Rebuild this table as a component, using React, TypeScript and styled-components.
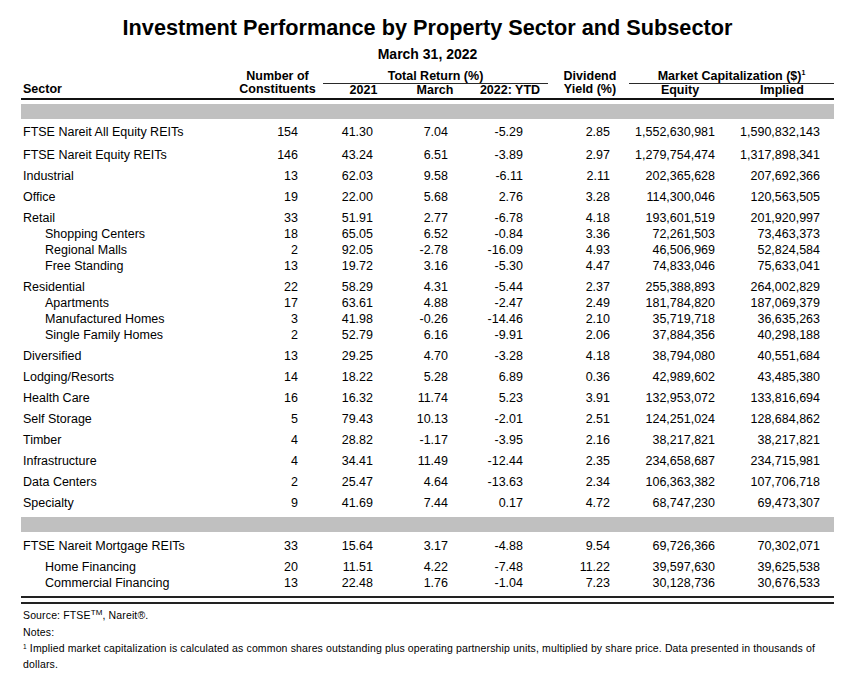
import React from "react";
import styled, { createGlobalStyle } from "styled-components";

const GlobalStyle = createGlobalStyle`
  html, body {
    margin: 0;
    padding: 0;
    background: #ffffff;
  }
  body {
    font-family: "Liberation Sans", Arial, sans-serif;
    color: #000;
  }
  * { box-sizing: border-box; }
`;

const Page = styled.div`
  width: 856px;
  padding: 15px 22px 0 21px;
`;

const Title = styled.h1`
  margin: 0;
  text-align: center;
  font-size: 21.7px;
  line-height: 26px;
  font-weight: 700;
`;

const DateLine = styled.div`
  margin-top: 5px;
  text-align: center;
  font-size: 14px;
  line-height: 16px;
  font-weight: 700;
`;

const HeaderRow = styled.div`
  margin-top: 7.5px;
  display: flex;
  align-items: flex-end;
  padding-bottom: 1.5px;
  border-bottom: 2px solid #111;
  font-weight: 700;
  font-size: 12.5px;
`;

const HeadCell = styled.div<{ $w: number; $align?: string; $pl?: number }>`
  width: ${(p) => p.$w}px;
  flex: none;
  display: flex;
  flex-direction: column;
  align-items: ${(p) => p.$align || "center"};
  padding-left: ${(p) => p.$pl || 0}px;
  line-height: 13.5px;
  white-space: nowrap;
`;

const Group = styled.div<{ $w: number }>`
  width: ${(p) => p.$w}px;
  flex: none;
  display: flex;
  flex-direction: column;
`;

const GroupTitle = styled.div<{ $ml?: number; $mr?: number }>`
  margin-left: ${(p) => p.$ml || 0}px;
  margin-right: ${(p) => p.$mr || 0}px;
  line-height: 12.5px;
  text-align: center;
  white-space: nowrap;
  border-bottom: 1.5px solid #2a2a2a;
`;

const GroupSubs = styled.div<{ $cols: string }>`
  display: grid;
  grid-template-columns: ${(p) => p.$cols};
  line-height: 13px;
  text-align: center;
  white-space: nowrap;
`;

const Sup = styled.sup`
  font-size: 7px;
  vertical-align: 5px;
  line-height: 0;
`;

const Band = styled.div<{ $mt: number }>`
  margin-top: ${(p) => p.$mt}px;
  height: 15px;
  background: #c0c0c0;
`;

const Row = styled.div<{ $mt: number }>`
  margin-top: ${(p) => p.$mt}px;
  display: grid;
  grid-template-columns: 237px 40px 75px 75px 75px 87px 105px 105px;
  padding-right: 14px;
  font-size: 12.5px;
  line-height: 16px;
  white-space: nowrap;
`;

const NameCell = styled.div<{ $sub?: boolean }>`
  padding-left: ${(p) => (p.$sub ? 24 : 2)}px;
`;

const NumCell = styled.div`
  text-align: right;
`;

const DoubleRule = styled.div`
  margin-top: 5px;
  height: 8px;
  border-top: 2px solid #222;
  border-bottom: 2px solid #222;
`;

const Foot = styled.div<{ $mt: number }>`
  margin-top: ${(p) => p.$mt}px;
  padding-left: 2px;
  font-size: 10.5px;
  line-height: 16px;
  letter-spacing: 0.14px;
`;

const FootSup = styled.sup<{ $size?: number; $lift?: number }>`
  font-size: ${(p) => p.$size || 6.5}px;
  vertical-align: ${(p) => p.$lift ?? 3}px;
  line-height: 0;
`;

type R = {
  name: string;
  v: string[];
  mt: number;
  sub?: boolean;
};

const r = (name: string, mt: number, sub: boolean, v: string) => ({
  name,
  mt,
  sub,
  v: v.split(" "),
});

const equityRows: R[] = [
  r("FTSE Nareit All Equity REITs", 5, false, "154 41.30 7.04 -5.29 2.85 1,552,630,981 1,590,832,143"),
  r("FTSE Nareit Equity REITs", 7, false, "146 43.24 6.51 -3.89 2.97 1,279,754,474 1,317,898,341"),
  r("Industrial", 5, false, "13 62.03 9.58 -6.11 2.11 202,365,628 207,692,366"),
  r("Office", 5, false, "19 22.00 5.68 2.76 3.28 114,300,046 120,563,505"),
  r("Retail", 5, false, "33 51.91 2.77 -6.78 4.18 193,601,519 201,920,997"),
  r("Shopping Centers", 0, true, "18 65.05 6.52 -0.84 3.36 72,261,503 73,463,373"),
  r("Regional Malls", 0, true, "2 92.05 -2.78 -16.09 4.93 46,506,969 52,824,584"),
  r("Free Standing", 0, true, "13 19.72 3.16 -5.30 4.47 74,833,046 75,633,041"),
  r("Residential", 5, false, "22 58.29 4.31 -5.44 2.37 255,388,893 264,002,829"),
  r("Apartments", 0, true, "17 63.61 4.88 -2.47 2.49 181,784,820 187,069,379"),
  r("Manufactured Homes", 0, true, "3 41.98 -0.26 -14.46 2.10 35,719,718 36,635,263"),
  r("Single Family Homes", 0, true, "2 52.79 6.16 -9.91 2.06 37,884,356 40,298,188"),
  r("Diversified", 5, false, "13 29.25 4.70 -3.28 4.18 38,794,080 40,551,684"),
  r("Lodging/Resorts", 5, false, "14 18.22 5.28 6.89 0.36 42,989,602 43,485,380"),
  r("Health Care", 5, false, "16 16.32 11.74 5.23 3.91 132,953,072 133,816,694"),
  r("Self Storage", 5, false, "5 79.43 10.13 -2.01 2.51 124,251,024 128,684,862"),
  r("Timber", 5, false, "4 28.82 -1.17 -3.95 2.16 38,217,821 38,217,821"),
  r("Infrastructure", 5, false, "4 34.41 11.49 -12.44 2.35 234,658,687 234,715,981"),
  r("Data Centers", 5, false, "2 25.47 4.64 -13.63 2.34 106,363,382 107,706,718"),
  r("Specialty", 5, false, "9 41.69 7.44 0.17 4.72 68,747,230 69,473,307"),
];

const mortgageRows: R[] = [
  r("FTSE Nareit Mortgage REITs", 5.5, false, "33 15.64 3.17 -4.88 9.54 69,726,366 70,302,071"),
  r("Home Financing", 5.5, true, "20 11.51 4.22 -7.48 11.22 39,597,630 39,625,538"),
  r("Commercial Financing", 0, true, "13 22.48 1.76 -1.04 7.23 30,128,736 30,676,533"),
];

const DataRow: React.FC<{ row: R }> = ({ row }) => (
  <Row $mt={row.mt}>
    <NameCell $sub={row.sub}>{row.name}</NameCell>
    {row.v.map((x, i) => (
      <NumCell key={i}>{x}</NumCell>
    ))}
  </Row>
);

export default function App() {
  return (
    <Page>
      <GlobalStyle />
      <Title>Investment Performance by Property Sector and Subsector</Title>
      <DateLine>March 31, 2022</DateLine>
      <HeaderRow>
        <HeadCell $w={211} $align="flex-start" $pl={2}>
          <span>Sector</span>
        </HeadCell>
        <HeadCell $w={91}>
          <span>Number of</span>
          <span>Constituents</span>
        </HeadCell>
        <Group $w={231}>
          <GroupTitle $mr={6}>Total Return (%)</GroupTitle>
          <GroupSubs $cols="81px 62px 88px">
            <span>2021</span>
            <span>March</span>
            <span>2022: YTD</span>
          </GroupSubs>
        </Group>
        <HeadCell $w={72}>
          <span>Dividend</span>
          <span>Yield (%)</span>
        </HeadCell>
        <Group $w={208}>
          <GroupTitle $ml={3}>
            Market Capitalization ($)<Sup>1</Sup>
          </GroupTitle>
          <GroupSubs $cols="108px 96px 4px">
            <span>Equity</span>
            <span>Implied</span>
            <span />
          </GroupSubs>
        </Group>
      </HeaderRow>
      <Band $mt={4} />
      {equityRows.map((row) => (
        <DataRow key={row.name} row={row} />
      ))}
      <Band $mt={6} />
      {mortgageRows.map((row) => (
        <DataRow key={row.name} row={row} />
      ))}
      <DoubleRule />
      <Foot $mt={3}>
        Source: FTSE<FootSup $size={8} $lift={4}>TM</FootSup>, Nareit®.
      </Foot>
      <Foot $mt={1}>Notes:</Foot>
      <Foot $mt={0}>
        <FootSup>1</FootSup> Implied market capitalization is calculated as common shares outstanding plus
        operating partnership units, multiplied by share price. Data presented in thousands of dollars.
      </Foot>
    </Page>
  );
}
